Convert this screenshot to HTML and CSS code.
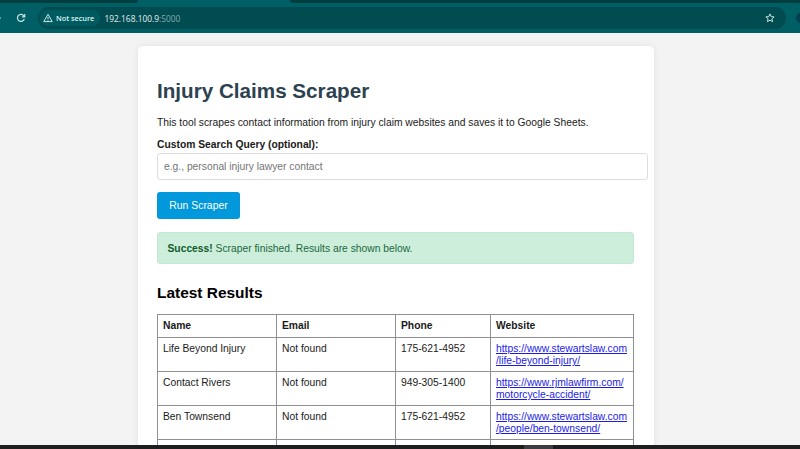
FILE: index.html
```html
<!DOCTYPE html>
<html lang="en">
<head>
<meta charset="utf-8">
<title>Injury Claims Scraper</title>
<link rel="stylesheet" href="styles.css">
</head>
<body>
<header class="browser">
  <div class="tabs"><span class="tab-left"></span><span class="tab-active"></span><span class="tab-right"></span></div>
  <div class="toolbar">
    <svg class="forward" viewBox="0 0 2 6"><path d="M0 3h1"/></svg>
    <svg class="reload" viewBox="0 0 10 10"><path d="M8.3 6A3.5 3.5 0 1 1 7.6 2.6L8.6 3.6M8.7 1v2.8H5.9"/></svg>
    <div class="address">
      <div class="security">
        <svg class="warning" viewBox="0 0 10 10"><path d="M5 1.3L9.2 8.6H.8ZM5 4v2.2M5 7v.8"/></svg>
        <span>Not secure</span>
      </div>
      <span class="url">192.168.100.9<span class="port">:5000</span></span>
      <svg class="star" viewBox="0 0 10 10"><path d="M5 .9l1.2 2.7 2.9.3-2.2 1.9.7 2.9L5 7.2 2.4 8.7l.7-2.9L.9 3.9l2.9-.3Z"/></svg>
    </div>
    <span class="extension"></span>
  </div>
</header>
<main class="page">
  <section class="card">
    <h1>Injury Claims Scraper</h1>
    <p class="intro">This tool scrapes contact information from injury claim websites and saves it to Google Sheets.</p>
    <label for="query">Custom Search Query (optional):</label>
    <input id="query" type="text" placeholder="e.g., personal injury lawyer contact">
    <button type="button">Run Scraper</button>
    <div class="alert"><strong>Success!</strong> Scraper finished. Results are shown below.</div>
    <h2>Latest Results</h2>
    <table>
      <colgroup><col class="name"><col class="email"><col class="phone"><col class="site"></colgroup>
      <thead><tr><th>Name</th><th>Email</th><th>Phone</th><th>Website</th></tr></thead>
      <tbody>
        <tr><td>Life Beyond Injury</td><td>Not found</td><td>175-621-4952</td><td><a href="#">https://www.stewartslaw.com<br>/life-beyond-injury/</a></td></tr>
        <tr><td>Contact Rivers</td><td>Not found</td><td>949-305-1400</td><td><a href="#">https://www.rjmlawfirm.com/<br>motorcycle-accident/</a></td></tr>
        <tr><td>Ben Townsend</td><td>Not found</td><td>175-621-4952</td><td><a href="#">https://www.stewartslaw.com<br>/people/ben-townsend/</a></td></tr>
        <tr><td></td><td></td><td></td><td></td></tr>
      </tbody>
    </table>
  </section>
</main>
<footer class="taskbar"><span class="task"></span></footer>
</body>
</html>
```
FILE: styles.css
```css
* { box-sizing: border-box; }
body {
  margin: 0;
  height: 449px;
  display: flex;
  flex-direction: column;
  overflow: hidden;
  font-family: "Liberation Sans", Arial, sans-serif;
  font-size: 10.3px;
  color: #1a1a1a;
  background: #f3f3f3;
}
svg { fill: none; stroke: #c8e4e4; stroke-width: 1.2; flex: none; }
.browser { flex: none; height: 33px; background: #005f64; }
.tabs { display: flex; height: 3px; }
.tab-left { width: 138px; background: #003e40; border-bottom-right-radius: 3px; }
.tab-active { width: 152px; }
.tab-right { flex: 1; background: #003e40; border-bottom-left-radius: 3px; }
.toolbar { display: flex; align-items: center; height: 30px; overflow: hidden; }
.forward { width: 2px; height: 6px; }
.reload { width: 10px; height: 10px; margin: 0 12px 0 14px; }
.address {
  display: flex;
  flex: none;
  align-items: center;
  width: 748px;
  height: 22px;
  border-radius: 11px;
  background: #004c50;
}
.security {
  display: flex;
  align-items: center;
  gap: 3px;
  width: 60px;
  height: 16px;
  margin-left: 2px;
  padding-left: 3px;
  border-radius: 8px;
  background: #005b60;
  color: #dff3f3;
  font: 600 7.3px "Open Sans", sans-serif;
  white-space: nowrap;
}
.warning { width: 10px; height: 10px; stroke-width: 1; }
.url { margin-left: 4.5px; font: 8.4px "Open Sans", sans-serif; color: #e2f0f0; }
.port { color: #82acae; }
.star { width: 10px; height: 10px; margin: 0 11px 0 auto; stroke-width: 1; }
.extension { width: 10px; height: 10px; margin-left: 10px; border-radius: 5px; background: #003e50; flex: none; }
.page { flex: 1; min-height: 0; overflow: hidden; padding-top: 13px; }
.card {
  width: 516px;
  height: 600px;
  margin-left: 137.5px;
  padding: 33px 19.5px 0;
  border-radius: 5px;
  background: #fff;
  box-shadow: 0 0 7px rgba(0, 0, 0, .08);
}
h1 { margin: 0; font-size: 20.65px; line-height: 24px; color: #2c4250; }
.intro { margin: 13px 0 9px; line-height: 13px; }
label { display: block; line-height: 13px; font-weight: bold; }
input {
  display: block;
  width: 491px;
  height: 27px;
  margin: 2px 0 0;
  padding: 0 6px;
  border: 1px solid #ddd;
  border-radius: 3px;
  font: inherit;
  background: #fff;
}
input::placeholder { color: #757575; }
button {
  display: block;
  width: 83px;
  height: 27px;
  margin: 12px 0 13px;
  padding: 0;
  border: 0;
  border-radius: 3px;
  background: #0298dc;
  color: #fff;
  font: inherit;
  font-size: 10.4px;
}
.alert {
  height: 32px;
  padding-left: 9.5px;
  border: 1px solid #c4e8d3;
  border-radius: 3px;
  background: #cdeedb;
  line-height: 31px;
  color: #1c6840;
}
.alert strong { color: #0f5a2c; }
h2 { margin: 20px 0 12px; font-size: 15.45px; line-height: 18px; color: #000; }
table { width: 477px; table-layout: fixed; border-collapse: collapse; }
.name, .email { width: 119px; }
.phone { width: 95px; }
th, td {
  height: 34px;
  padding: 5px 5px 4px;
  border: 1px solid #909090;
  text-align: left;
  vertical-align: top;
  line-height: 12px;
  white-space: nowrap;
}
th { height: 23px; }
a { color: #1c1ce4; }
.taskbar { flex: none; height: 4px; background: #1c1e20; }
.task { display: block; width: 29px; height: 4px; margin-left: 524px; background: #3b3d3f; }
```
